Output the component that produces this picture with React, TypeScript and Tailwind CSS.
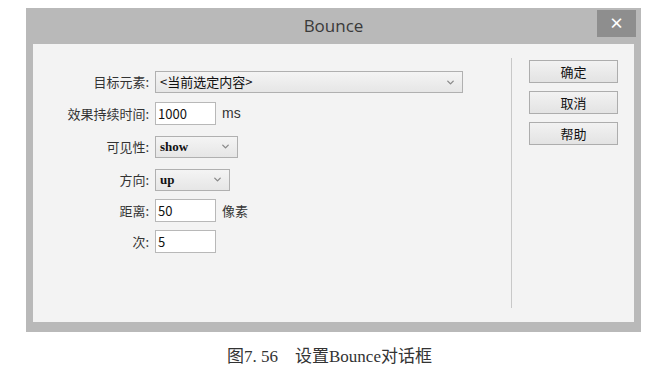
import { ChevronDown } from "lucide-react";

const labelFont = { fontFamily: '"Noto Sans CJK SC", sans-serif' };

const Row = ({ label, children, h }: { label: string; children: React.ReactNode; h: string }) => (
  <div className={`flex items-center ${h}`}>
    <div className="w-[122px] text-right pr-[6px] text-[13px] text-[#333]">{label}</div>
    {children}
  </div>
);

const Select = ({ value, w, serif }: { value: string; w: string; serif?: boolean }) => (
  <div
    className={`${w} h-[22px] flex items-center justify-between pl-[4px] pr-[6px] border border-[#b0b0b0] bg-gradient-to-b from-[#f4f4f4] to-[#e6e6e6] text-[13px] text-[#111]`}
    style={serif ? { fontFamily: '"Liberation Serif", serif', fontWeight: 600 } : undefined}
  >
    <span>{value}</span>
    <ChevronDown size={11} strokeWidth={3} className="text-[#8a8a8a]" />
  </div>
);

const Input = ({ value }: { value: string }) => (
  <div className="w-[61px] h-[23px] flex items-center pl-[2px] border border-[#b8b8b8] bg-white text-[13px] text-[#111]">
    {value}
  </div>
);

const Btn = ({ label }: { label: string }) => (
  <div className="w-[89px] h-[23px] flex items-center justify-center border border-[#adadad] bg-gradient-to-b from-[#f2f2f2] to-[#e3e3e3] text-[13px] text-[#111]">
    {label}
  </div>
);

export default function App() {
  return (
    <div className="w-[661px] h-[368px] bg-white" style={labelFont}>
      <div className="pt-[8px] pl-[26px]">
        <div className="w-[615px] h-[324px] bg-[#b9b9b9] flex flex-col px-[7px] pb-[10px]">
          <div className="h-[36px] relative flex items-center justify-center">
            <span className="text-[17px] text-[#3a3a3a]" style={{ fontFamily: '"Open Sans", sans-serif' }}>
              Bounce
            </span>
            <div className="absolute right-[-2px] top-[2px] w-[39px] h-[27px] bg-[#8e8e8e] flex items-center justify-center text-white text-[15px] font-bold">
              ×
            </div>
          </div>
          <div className="flex-1 bg-[#f3f3f3] flex">
            <div className="w-[478px] flex flex-col pt-[23px]">
              <Row label="目标元素:" h="h-[30px]">
                <Select value="<当前选定内容>" w="w-[308px]" />
              </Row>
              <Row label="效果持续时间:" h="h-[33px]">
                <Input value="1000" />
                <span className="ml-[6px] text-[14px] text-[#333]" style={{ fontFamily: '"Liberation Sans", sans-serif' }}>ms</span>
              </Row>
              <Row label="可见性:" h="h-[33px]">
                <Select value="show" w="w-[83px]" serif />
              </Row>
              <Row label="方向:" h="h-[33px]">
                <Select value="up" w="w-[75px]" serif />
              </Row>
              <Row label="距离:" h="h-[29px]">
                <Input value="50" />
                <span className="ml-[6px] text-[13px] text-[#333]">像素</span>
              </Row>
              <Row label="次:" h="h-[33px]">
                <Input value="5" />
              </Row>
            </div>
            <div className="w-px bg-[#c8c8c8] mt-[14px] mb-[14px]" />
            <div className="flex flex-col gap-[8px] pl-[17px] pt-[16px]">
              <Btn label="确定" />
              <Btn label="取消" />
              <Btn label="帮助" />
            </div>
          </div>
        </div>
      </div>
      <div
        className="text-center text-[17px] text-[#333] mt-[12px] pr-[2px]"
        style={{ fontFamily: '"Liberation Serif", "Noto Sans CJK SC", serif' }}
      >
        图7. 56　设置Bounce对话框
      </div>
    </div>
  );
}
